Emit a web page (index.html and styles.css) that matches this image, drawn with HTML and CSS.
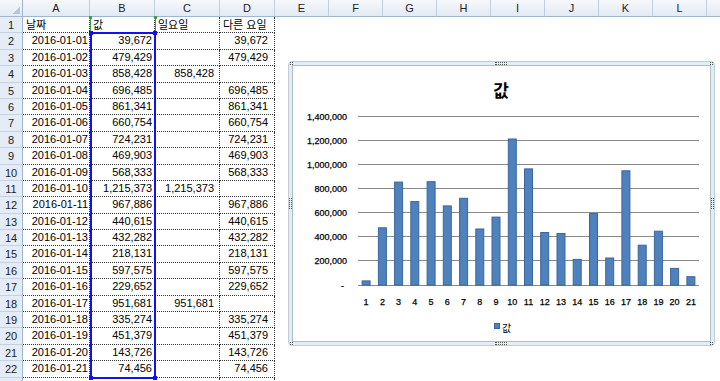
FILE: index.html
```html
<!DOCTYPE html>
<html lang="ko">
<head>
    <meta charset="UTF-8">
    <title>값 - 차트</title>
    <link rel="stylesheet" href="styles.css">
</head>
<body>
    <div class="sheet">
        <div class="col-heads">
            <div class="corner"></div>
            <div class="col-head col-a">A</div>
            <div class="col-head col-b">B</div>
            <div class="col-head col-c">C</div>
            <div class="col-head col-d">D</div>
            <div class="col-head">E</div>
            <div class="col-head">F</div>
            <div class="col-head">G</div>
            <div class="col-head">H</div>
            <div class="col-head">I</div>
            <div class="col-head">J</div>
            <div class="col-head">K</div>
            <div class="col-head">L</div>
            <div class="col-head col-last"></div>
        </div>

        <div class="rows">
            <div class="row-head">1</div><div class="cell text">날짜</div><div class="cell text">값</div><div class="cell text">일요일</div><div class="cell text">다른 요일</div>
            <div class="row-head">2</div><div class="cell date">2016-01-01</div><div class="cell num-b">39,672</div><div class="cell num-c"></div><div class="cell num-d">39,672</div>
            <div class="row-head">3</div><div class="cell date">2016-01-02</div><div class="cell num-b">479,429</div><div class="cell num-c"></div><div class="cell num-d">479,429</div>
            <div class="row-head">4</div><div class="cell date">2016-01-03</div><div class="cell num-b">858,428</div><div class="cell num-c">858,428</div><div class="cell num-d"></div>
            <div class="row-head">5</div><div class="cell date">2016-01-04</div><div class="cell num-b">696,485</div><div class="cell num-c"></div><div class="cell num-d">696,485</div>
            <div class="row-head">6</div><div class="cell date">2016-01-05</div><div class="cell num-b">861,341</div><div class="cell num-c"></div><div class="cell num-d">861,341</div>
            <div class="row-head">7</div><div class="cell date">2016-01-06</div><div class="cell num-b">660,754</div><div class="cell num-c"></div><div class="cell num-d">660,754</div>
            <div class="row-head">8</div><div class="cell date">2016-01-07</div><div class="cell num-b">724,231</div><div class="cell num-c"></div><div class="cell num-d">724,231</div>
            <div class="row-head">9</div><div class="cell date">2016-01-08</div><div class="cell num-b">469,903</div><div class="cell num-c"></div><div class="cell num-d">469,903</div>
            <div class="row-head">10</div><div class="cell date">2016-01-09</div><div class="cell num-b">568,333</div><div class="cell num-c"></div><div class="cell num-d">568,333</div>
            <div class="row-head">11</div><div class="cell date">2016-01-10</div><div class="cell num-b">1,215,373</div><div class="cell num-c">1,215,373</div><div class="cell num-d"></div>
            <div class="row-head">12</div><div class="cell date">2016-01-11</div><div class="cell num-b">967,886</div><div class="cell num-c"></div><div class="cell num-d">967,886</div>
            <div class="row-head">13</div><div class="cell date">2016-01-12</div><div class="cell num-b">440,615</div><div class="cell num-c"></div><div class="cell num-d">440,615</div>
            <div class="row-head">14</div><div class="cell date">2016-01-13</div><div class="cell num-b">432,282</div><div class="cell num-c"></div><div class="cell num-d">432,282</div>
            <div class="row-head">15</div><div class="cell date">2016-01-14</div><div class="cell num-b">218,131</div><div class="cell num-c"></div><div class="cell num-d">218,131</div>
            <div class="row-head">16</div><div class="cell date">2016-01-15</div><div class="cell num-b">597,575</div><div class="cell num-c"></div><div class="cell num-d">597,575</div>
            <div class="row-head">17</div><div class="cell date">2016-01-16</div><div class="cell num-b">229,652</div><div class="cell num-c"></div><div class="cell num-d">229,652</div>
            <div class="row-head">18</div><div class="cell date">2016-01-17</div><div class="cell num-b">951,681</div><div class="cell num-c">951,681</div><div class="cell num-d"></div>
            <div class="row-head">19</div><div class="cell date">2016-01-18</div><div class="cell num-b">335,274</div><div class="cell num-c"></div><div class="cell num-d">335,274</div>
            <div class="row-head">20</div><div class="cell date">2016-01-19</div><div class="cell num-b">451,379</div><div class="cell num-c"></div><div class="cell num-d">451,379</div>
            <div class="row-head">21</div><div class="cell date">2016-01-20</div><div class="cell num-b">143,726</div><div class="cell num-c"></div><div class="cell num-d">143,726</div>
            <div class="row-head">22</div><div class="cell date">2016-01-21</div><div class="cell num-b">74,456</div><div class="cell num-c"></div><div class="cell num-d">74,456</div>
            <div class="row-head"></div><div class="cell blank"></div><div class="cell blank"></div><div class="cell blank"></div><div class="cell blank"></div>
        </div>

        <!-- series name / values highlight -->
        <div class="range-name">
            <span class="grip grip-tl"></span>
            <span class="grip grip-tr"></span>
        </div>
        <div class="range-values">
            <span class="grip grip-tl"></span>
            <span class="grip grip-tr"></span>
            <span class="grip grip-bl"></span>
            <span class="grip grip-br"></span>
        </div>

        <div class="chart">
            <svg class="plot" width="425" height="283">
                <g transform="translate(-289 -62)">
                    <text class="title" x="501" y="97">값</text>

                    <g class="gridlines">
                        <line x1="358" y1="116.5" x2="699" y2="116.5"/>
                        <line x1="358" y1="140.5" x2="699" y2="140.5"/>
                        <line x1="358" y1="164.5" x2="699" y2="164.5"/>
                        <line x1="358" y1="188.5" x2="699" y2="188.5"/>
                        <line x1="358" y1="212.5" x2="699" y2="212.5"/>
                        <line x1="358" y1="236.5" x2="699" y2="236.5"/>
                        <line x1="358" y1="260.5" x2="699" y2="260.5"/>
                        <line x1="358" y1="285.5" x2="699" y2="285.5"/>
                    </g>

                    <g class="y-labels">
                        <text x="347" y="119.5">1,400,000</text>
                        <text x="347" y="143.5">1,200,000</text>
                        <text x="347" y="167.5">1,000,000</text>
                        <text x="347" y="191.5">800,000</text>
                        <text x="347" y="215.5">600,000</text>
                        <text x="347" y="239.5">400,000</text>
                        <text x="347" y="263.5">200,000</text>
                        <text x="344" y="288.5">-</text>
                    </g>

                    <g class="bars">
                        <rect x="362.1" y="280.9" width="8" height="4.3"/>
                        <rect x="378.4" y="227.8" width="8" height="57.4"/>
                        <rect x="394.6" y="182.1" width="8" height="103.1"/>
                        <rect x="410.8" y="201.6" width="8" height="83.6"/>
                        <rect x="427.1" y="181.7" width="8" height="103.5"/>
                        <rect x="443.3" y="205.9" width="8" height="79.3"/>
                        <rect x="459.6" y="198.3" width="8" height="86.9"/>
                        <rect x="475.8" y="229.0" width="8" height="56.2"/>
                        <rect x="492.0" y="217.1" width="8" height="68.1"/>
                        <rect x="508.3" y="139.0" width="8" height="146.2"/>
                        <rect x="524.5" y="168.9" width="8" height="116.3"/>
                        <rect x="540.7" y="232.5" width="8" height="52.7"/>
                        <rect x="557.0" y="233.5" width="8" height="51.7"/>
                        <rect x="573.2" y="259.4" width="8" height="25.8"/>
                        <rect x="589.5" y="213.6" width="8" height="71.6"/>
                        <rect x="605.7" y="258.0" width="8" height="27.2"/>
                        <rect x="621.9" y="170.8" width="8" height="114.4"/>
                        <rect x="638.2" y="245.2" width="8" height="40.0"/>
                        <rect x="654.4" y="231.2" width="8" height="54.0"/>
                        <rect x="670.6" y="268.4" width="8" height="16.8"/>
                        <rect x="686.9" y="276.7" width="8" height="8.5"/>
                    </g>

                    <g class="x-labels">
                        <text x="366.1" y="304.5">1</text>
                        <text x="382.4" y="304.5">2</text>
                        <text x="398.6" y="304.5">3</text>
                        <text x="414.8" y="304.5">4</text>
                        <text x="431.1" y="304.5">5</text>
                        <text x="447.3" y="304.5">6</text>
                        <text x="463.6" y="304.5">7</text>
                        <text x="479.8" y="304.5">8</text>
                        <text x="496.0" y="304.5">9</text>
                        <text x="512.3" y="304.5">10</text>
                        <text x="528.5" y="304.5">11</text>
                        <text x="544.7" y="304.5">12</text>
                        <text x="561.0" y="304.5">13</text>
                        <text x="577.2" y="304.5">14</text>
                        <text x="593.5" y="304.5">15</text>
                        <text x="609.7" y="304.5">16</text>
                        <text x="625.9" y="304.5">17</text>
                        <text x="642.2" y="304.5">18</text>
                        <text x="658.4" y="304.5">19</text>
                        <text x="674.6" y="304.5">20</text>
                        <text x="690.9" y="304.5">21</text>
                    </g>

                    <g class="legend">
                        <rect x="494.5" y="323.5" width="5" height="5"/>
                        <text x="502" y="332">값</text>
                    </g>
                </g>
            </svg>

            <span class="handle handle-top"></span>
            <span class="handle handle-bottom"></span>
            <span class="handle handle-left"></span>
            <span class="handle handle-right"></span>
            <span class="handle corner-tl"></span>
            <span class="handle corner-tr"></span>
            <span class="handle corner-bl"></span>
            <span class="handle corner-br"></span>
        </div>
    </div>
</body>
</html>
```

FILE: styles.css
```css
html, body {
    margin: 0;
    height: 381px;
    overflow: hidden;
    background: #fff;
}
.sheet {
    position: relative;
    font-family: "Liberation Sans", "Noto Sans CJK KR", sans-serif;
    font-size: 11px;
    color: #000;
}

/* column headers */
.col-heads {
    display: flex;
    height: 17px;
    overflow: hidden;
}
.corner, .col-head {
    flex: none;
    box-sizing: border-box;
    height: 17px;
    width: 54px;
    background: linear-gradient(#f6f8fc, #e3eaf4);
    border-right: 1px solid #c0cfe0;
    border-bottom: 1px solid #9eb6ce;
    text-align: center;
    line-height: 17px;
    color: #222;
}
.corner {
    width: 23px;
    border-right-color: #9eb6ce;
    background:
        linear-gradient(135deg, transparent 62%, #b7c7da 62%) no-repeat right 2px bottom 2px / 10px 10px,
        linear-gradient(#f6f8fc, #e3eaf4);
}
.col-a { width: 67px; }
.col-b { width: 65px; }
.col-c { width: 65px; }
.col-d { width: 55px; }
.col-last { flex: 1; border-right: none; }

/* cells */
.rows {
    display: grid;
    grid-template-columns: 23px 67px 65px 65px 55px;
    grid-auto-rows: 16.4px;
}
.row-head {
    box-sizing: border-box;
    background: #e4ecf7;
    border-right: 1px solid #9eb6ce;
    border-bottom: 1px solid #c3d2e3;
    text-align: center;
    line-height: 16px;
    color: #222;
}
.cell {
    box-sizing: border-box;
    border-right: 1px dotted #333;
    border-bottom: 1px dotted #333;
    line-height: 15px;
    white-space: nowrap;
    overflow: hidden;
}
.text {
    padding-left: 3px;
    font-family: "Noto Sans CJK KR", "Liberation Sans", sans-serif;
    font-size: 11px;
    line-height: 15px;
}
.date  { text-align: right; padding-right: 1px; }
.num-b { text-align: right; padding-right: 2px; }
.num-c { text-align: right; padding-right: 5px; }
.num-d { text-align: right; padding-right: 6px; }
.blank { border-bottom: none; }

/* chart source highlight */
.range-name {
    position: absolute;
    left: 90px;
    top: 17px;
    width: 64px;
    height: 16px;
    border-left: 1px solid #3ca03c;
    border-right: 1px solid #3ca03c;
}
.range-values {
    position: absolute;
    left: 90px;
    top: 32px;
    width: 62px;
    height: 343px;
    border: 2px solid #1010f0;
}
.grip {
    position: absolute;
    width: 4px;
    height: 4px;
    background: #1010f0;
}
.range-name .grip { background: #3ca03c; width: 3px; height: 3px; }
.range-name .grip-tl { left: -2px; top: -1px; }
.range-name .grip-tr { right: -2px; top: -1px; }
.range-values .grip-tl { left: -3px; top: -3px; }
.range-values .grip-tr { right: -3px; top: -3px; }
.range-values .grip-bl { left: -3px; bottom: -3px; }
.range-values .grip-br { right: -3px; bottom: -3px; }

/* chart */
.chart {
    position: absolute;
    left: 288px;
    top: 61px;
    width: 425px;
    height: 283px;
    border: 1px solid #c2ccd6;
    border-radius: 4px;
    background: #fff;
    box-shadow: inset 0 0 0 3px #e1eff2, inset 0 0 0 4px #aebccb;
}
.plot {
    position: absolute;
    left: 0;
    top: 0;
    font-family: "Liberation Sans", sans-serif;
}
.title {
    font-family: "Noto Sans CJK KR", sans-serif;
    font-size: 17px;
    font-weight: bold;
    text-anchor: middle;
}
.gridlines line {
    stroke: #8a8a8a;
    stroke-width: 1;
    shape-rendering: crispEdges;
}
.y-labels text, .x-labels text {
    font-size: 9px;
    fill: #000;
    stroke: #000;
    stroke-width: 0.25;
}
.y-labels text { text-anchor: end; }
.x-labels text { text-anchor: middle; }
.bars rect {
    fill: #4f81bd;
    stroke: #3a669c;
    stroke-width: 1;
}
.legend rect {
    fill: #4f81bd;
    stroke: #3a669c;
    stroke-width: 1;
}
.legend text {
    font-family: "Noto Sans CJK KR", sans-serif;
    font-size: 10px;
}
.handle {
    position: absolute;
    box-sizing: border-box;
}
.handle-top, .handle-bottom {
    left: 206px;
    width: 12px;
    height: 3px;
    border-top: 1px dotted #555;
    border-bottom: 1px dotted #555;
}
.handle-top { top: 0; }
.handle-bottom { bottom: 0; }
.handle-left, .handle-right {
    top: 136px;
    width: 3px;
    height: 11px;
    border-left: 1px dotted #555;
    border-right: 1px dotted #555;
}
.handle-left { left: 0; }
.handle-right { right: 0; }
.corner-tl, .corner-tr, .corner-bl, .corner-br {
    width: 3px;
    height: 3px;
    border-top: 1px dotted #555;
    border-bottom: 1px dotted #555;
}
.corner-tl { left: 1px; top: 0; }
.corner-tr { right: 1px; top: 0; }
.corner-bl { left: 1px; bottom: 0; }
.corner-br { right: 1px; bottom: 0; }
```
